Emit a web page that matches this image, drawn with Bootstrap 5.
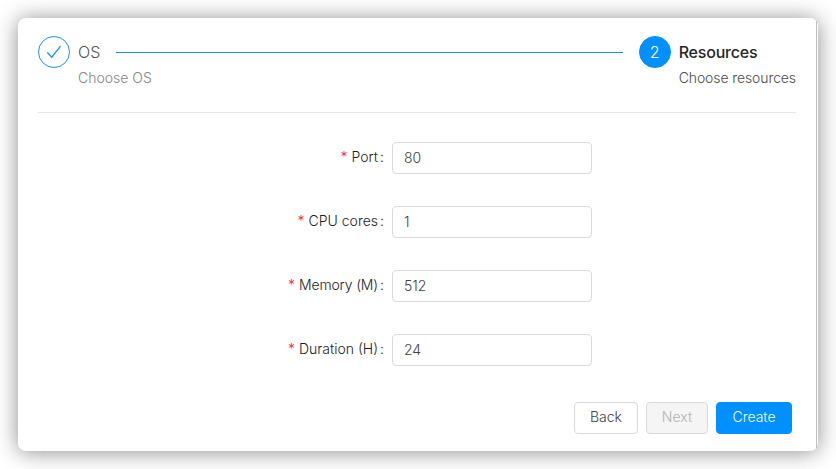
<!DOCTYPE html>
<html lang="en">
<head>
<meta charset="utf-8">
<meta name="viewport" content="width=device-width, initial-scale=1">
<title>Create instance</title>
<link href="https://cdn.jsdelivr.net/npm/bootstrap@5.3.0/dist/css/bootstrap.min.css" rel="stylesheet">
<style>
body { font: 300 14px/22px Inter, "Liberation Sans", sans-serif; color: #1c1c1c; background: #fff; height: 469px; padding: 18px 0 0 18px; overflow: hidden; }
.wizard { width: 800px; height: 433px; padding: 18px 22px 17px 20px; border-radius: 8px; background: #fff; box-shadow: 0 1px 22px rgba(0,0,0,.45); position: relative; }
.wizard::after { content: ""; position: absolute; right: 1px; top: 3px; bottom: 3px; width: 1px; background: #bdbdbd; }
.steps { height: 77px; border-bottom: 1px solid #e8e8e8; }
.step-icon { width: 32px; height: 32px; border: 1px solid #1890ff; border-radius: 50%; color: #1890ff; font-size: 16px; margin-right: 8px; }
.step-icon.current { background: #0090ff; border-color: #0090ff; color: #fff; }
.step-title { font-size: 16px; line-height: 32px; }
.step-note { font-size: 14px; line-height: 22px; margin-top: -1px; white-space: nowrap; }
.done { color: #4f4f4f; }
.done .step-note { width: 0; color: #858585; }
.now .step-title { font-weight: 500; color: #262626; letter-spacing: -.2px; }
.now .step-note { color: #4a4a4a; letter-spacing: -.1px; }
.step-line { height: 1px; background: #1890ff; margin: 16px 16px 0; }
.fields { padding-top: 29px; }
.field { height: 32px; margin-bottom: 32px; }
.field label { width: 346px; margin-right: 8px; line-height: 30px; height: 32px; text-align: right; white-space: nowrap; }
.snug { letter-spacing: -.15px; }
.req { color: #ff2040; margin-right: 4px; }
.colon { margin-left: 2px; }
.field .form-control { width: 200px; height: 32px; padding: 3px 11px 5px; font-size: 14px; font-weight: 300; color: #404040; border-color: #d9d9d9; border-radius: 4px; }
.actions { padding-right: 4px; margin-top: 36px; }
.actions .btn { height: 32px; padding: 0 0 2px; font-size: 14px; font-weight: 300; line-height: 28px; border-radius: 4px; }
.b-back { width: 64px; border-color: #d9d9d9; color: #404040; background: #fff; }
.actions .b-next { width: 62px; border-color: #d9d9d9; color: #b3b3b3; background: #f5f5f5; opacity: 1; }
.b-create { width: 76px; background: #0090ff; border-color: #0090ff; color: #fff; }
</style>
</head>
<body>
<main class="wizard">
  <div class="steps d-flex align-items-start">
    <div class="d-flex done">
      <div class="step-icon d-flex align-items-center justify-content-center flex-shrink-0">
        <svg width="16" height="16" viewBox="0 0 16 16" fill="none" stroke="#1890ff" stroke-width="1.3"><path d="M1.3 8.5 5.8 13.2 14.5 2.2"/></svg>
      </div>
      <div><div class="step-title">OS</div><div class="step-note">Choose OS</div></div>
    </div>
    <div class="step-line flex-grow-1"></div>
    <div class="d-flex now">
      <div class="step-icon current d-flex align-items-center justify-content-center flex-shrink-0">2</div>
      <div><div class="step-title">Resources</div><div class="step-note">Choose resources</div></div>
    </div>
  </div>
  <form class="fields">
    <div class="field d-flex"><label for="port"><span class="req">*</span>Port<span class="colon">:</span></label><input id="port" class="form-control" value="80"></div>
    <div class="field d-flex"><label for="cpu"><span class="req">*</span>CPU cores<span class="colon">:</span></label><input id="cpu" class="form-control" value="1"></div>
    <div class="field d-flex"><label for="mem"><span class="req">*</span><span class="snug">Memory (M)</span><span class="colon">:</span></label><input id="mem" class="form-control" value="512"></div>
    <div class="field d-flex mb-0"><label for="dur"><span class="req">*</span>Duration (H)<span class="colon">:</span></label><input id="dur" class="form-control" value="24"></div>
    <div class="actions d-flex justify-content-end gap-2">
      <button type="button" class="btn b-back">Back</button>
      <button type="button" class="btn b-next" disabled>Next</button>
      <button type="button" class="btn b-create">Create</button>
    </div>
  </form>
</main>
<script src="https://cdn.jsdelivr.net/npm/bootstrap@5.3.0/dist/js/bootstrap.bundle.min.js"></script>
</body>
</html>
